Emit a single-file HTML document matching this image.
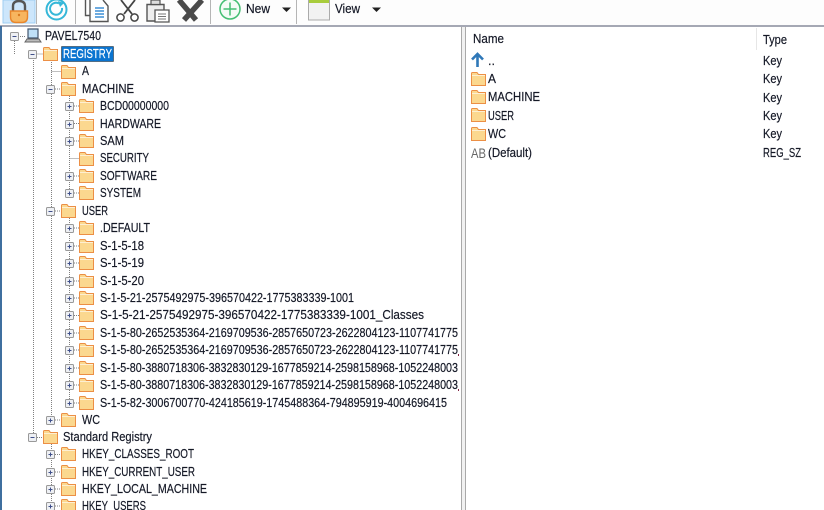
<!DOCTYPE html>
<html><head><meta charset="utf-8"><style>
html,body{margin:0;padding:0;background:#fff}
svg{display:block}
text{font-family:"Liberation Sans",sans-serif;font-size:12.5px;fill:#141826;stroke:#141826;stroke-width:.18px}
</style></head><body>
<svg width="824" height="510" viewBox="0 0 824 510" xmlns="http://www.w3.org/2000/svg">
<defs>
<g id="f"><path d="M0.5 2.5V1.5Q0.5 .5 1.5 .5H6L7.5 2.5H14.5V13.5H0.5Z" fill="#fbd88f" stroke="#ec8f45"/><path d="M1 3.5H14" stroke="#fff" stroke-opacity=".6"/></g>
<g id="m"><rect x=".5" y=".5" width="8" height="8" rx="1" fill="#eef0f4" stroke="#999"/><path d="M2.5 4.5h4" stroke="#40508a"/></g>
<g id="p"><rect x=".5" y=".5" width="8" height="8" rx="1" fill="#eef0f4" stroke="#999"/><path d="M2.5 4.5h4M4.5 2.5v4" stroke="#40508a"/></g>
</defs>
<rect width="824" height="510" fill="#fff"/>
<!-- toolbar -->
<rect width="824" height="26" fill="#fdfdfd"/>
<rect x="3" y="0" width="32" height="23" fill="#cde6fb" stroke="#9fcdf2"/>
<path d="M13 13V6Q13 1 19 1T25 6V13" fill="none" stroke="#555" stroke-width="2.4"/>
<path d="M10.500 11H27.500V17Q27.500 22.500 22 22.500H16Q10.500 22.500 10.500 17Z" fill="#f7b55f" stroke="#e8862c" stroke-width="1.4"/>
<circle cx="19" cy="15" r="1.2" fill="#d97a20"/>
<path d="M36.500 0V24M75.500 0V24M210.500 0V24M296.500 0V24" stroke="#b5b5b5"/>
<circle cx="56.500" cy="9.500" r="10" fill="none" stroke="#35b7d8" stroke-width="2"/>
<path d="M62 8A6 6 0 1 1 59 3.500" fill="none" stroke="#35b7d8" stroke-width="2"/>
<path d="M58 1L64 3L60 7Z" fill="#35b7d8"/>
<path d="M85.500 0V15.500H90M90 0V21.500H108V6L103 0" fill="#fff" stroke="#555" stroke-width="1.400"/>
<path d="M95 8H104M95 11H104M95 14H104M95 17H104" stroke="#3d8fd6" stroke-width="1.600"/>
<path d="M121 0L132 14M135 0L124 14" stroke="#444" stroke-width="1.800" fill="none"/>
<circle cx="120.500" cy="17.500" r="3.600" fill="#fff" stroke="#444" stroke-width="1.500"/>
<circle cx="134.500" cy="17.500" r="3.600" fill="#fff" stroke="#444" stroke-width="1.500"/>
<path d="M147 4.500H164V21H147Z" fill="#eee" stroke="#555" stroke-width="1.400"/>
<path d="M151 4.500V0H160V4.500Z" fill="#ddd" stroke="#555" stroke-width="1.200"/>
<path d="M155 10H169V22H155Z" fill="#fff" stroke="#555" stroke-width="1.300"/>
<path d="M158 14H166M158 16.500H166M158 19H166" stroke="#777"/>
<path d="M179 0L196 20M202 0L184 20" stroke="#4a4a4a" stroke-width="5.500"/>
<circle cx="230" cy="9" r="10" fill="#f4fbf6" stroke="#45bf74" stroke-width="1.500"/>
<path d="M230 2.500V15.500M223.500 9H236.500" stroke="#45bf74" stroke-width="1.500"/>
<text x="246" y="13" textLength="24" lengthAdjust="spacingAndGlyphs">New</text>
<path d="M282 7.500H291L286.500 12Z" fill="#222"/>
<rect x="308.500" y="0" width="21" height="20" fill="#f2f2f2" stroke="#aaa"/>
<path d="M309 1.500H329" stroke="#a8cc3c" stroke-width="3"/>
<text x="335" y="13" textLength="25" lengthAdjust="spacingAndGlyphs">View</text>
<path d="M372 7.500H381L376.500 12Z" fill="#222"/>
<!-- frame -->
<rect x="0" y="25" width="824" height="2" fill="#a5a8b4"/>
<rect x="0" y="26" width="2" height="484" fill="#3f6f9f"/>
<rect x="461" y="27" width="5" height="483" fill="#f1f1f1"/>
<path d="M461.500 27V510M465.500 27V510" stroke="#a9a9a9"/>
<!-- tree lines -->
<g stroke="#808080" stroke-dasharray="1 1" fill="none">
<path d="M14.500 41V54M33.500 58V437M33.500 54H43M18 36.500H25M51.500 58V420M51.500 71.500H61M55 89H61M55 211H61M55 420H61M37 437.500H43M51.500 442V506"/>
<path d="M69.500 94V193M69.500 216V403M74 106H79M74 123.500H79M74 141H79M69.500 158.500H79M74 176H79M74 193H79M74 228H79M74 246H79M74 263H79M74 281H79M74 298H79M74 315.500H79M74 333H79M74 350H79M74 368H79M74 385H79M74 403H79M55 454.500H61M55 472H61M55 489H61M55 506H61"/>
</g>
<!-- root -->
<use href="#m" x="10" y="32"/>
<path d="M28 29H38V38H28Z" fill="#bfe0f7" stroke="#44566e" stroke-width="1.200"/>
<path d="M25 42L27 39H39L41 42Z" fill="#bbb" stroke="#666"/>
<text x="45" y="40" textLength="56" lengthAdjust="spacingAndGlyphs">PAVEL7540</text>
<use href="#m" x="28" y="50"/><use href="#f" x="43" y="47"/>
<rect x="61.500" y="46.500" width="52" height="15" fill="#0a74d0" stroke="#222" stroke-dasharray="1 1"/>
<text x="63" y="58" textLength="49" lengthAdjust="spacingAndGlyphs" style="fill:#fff;stroke:#fff">REGISTRY</text>
<use href="#f" x="61" y="65"/><text x="82" y="75" textLength="7" lengthAdjust="spacingAndGlyphs">A</text>
<use href="#m" x="46" y="85"/><use href="#f" x="61" y="82"/><text x="82" y="93" textLength="52" lengthAdjust="spacingAndGlyphs">MACHINE</text>
<use href="#p" x="65" y="102"/><use href="#f" x="79" y="99"/><text x="100" y="110" textLength="69" lengthAdjust="spacingAndGlyphs">BCD00000000</text>
<use href="#p" x="65" y="120"/><use href="#f" x="79" y="117"/><text x="100" y="128" textLength="61" lengthAdjust="spacingAndGlyphs">HARDWARE</text>
<use href="#p" x="65" y="137"/><use href="#f" x="79" y="134"/><text x="100" y="145" textLength="24" lengthAdjust="spacingAndGlyphs">SAM</text>
<use href="#f" x="79" y="152"/><text x="100" y="162" textLength="49" lengthAdjust="spacingAndGlyphs">SECURITY</text>
<use href="#p" x="65" y="172"/><use href="#f" x="79" y="169"/><text x="100" y="180" textLength="57" lengthAdjust="spacingAndGlyphs">SOFTWARE</text>
<use href="#p" x="65" y="189"/><use href="#f" x="79" y="186"/><text x="100" y="197" textLength="41" lengthAdjust="spacingAndGlyphs">SYSTEM</text>
<use href="#m" x="46" y="207"/><use href="#f" x="61" y="204"/><text x="82" y="215" textLength="26" lengthAdjust="spacingAndGlyphs">USER</text>
<use href="#p" x="65" y="224"/><use href="#f" x="79" y="221"/><text x="100" y="232" textLength="50" lengthAdjust="spacingAndGlyphs">.DEFAULT</text>
<use href="#p" x="65" y="242"/><use href="#f" x="79" y="239"/><text x="100" y="250" textLength="44" lengthAdjust="spacingAndGlyphs">S-1-5-18</text>
<use href="#p" x="65" y="259"/><use href="#f" x="79" y="256"/><text x="100" y="267" textLength="44" lengthAdjust="spacingAndGlyphs">S-1-5-19</text>
<use href="#p" x="65" y="277"/><use href="#f" x="79" y="274"/><text x="100" y="285" textLength="44" lengthAdjust="spacingAndGlyphs">S-1-5-20</text>
<use href="#p" x="65" y="294"/><use href="#f" x="79" y="291"/><text x="100" y="302" textLength="254" lengthAdjust="spacingAndGlyphs">S-1-5-21-2575492975-396570422-1775383339-1001</text>
<use href="#p" x="65" y="311"/><use href="#f" x="79" y="308"/><text x="100" y="319" textLength="324" lengthAdjust="spacingAndGlyphs">S-1-5-21-2575492975-396570422-1775383339-1001_Classes</text>
<use href="#p" x="65" y="329"/><use href="#f" x="79" y="326"/><text x="100" y="337" textLength="358" lengthAdjust="spacingAndGlyphs">S-1-5-80-2652535364-2169709536-2857650723-2622804123-1107741775</text>
<use href="#p" x="65" y="346"/><use href="#f" x="79" y="343"/><text x="100" y="354" textLength="358" lengthAdjust="spacingAndGlyphs">S-1-5-80-2652535364-2169709536-2857650723-2622804123-1107741775</text>
<use href="#p" x="65" y="364"/><use href="#f" x="79" y="361"/><text x="100" y="372" textLength="358" lengthAdjust="spacingAndGlyphs">S-1-5-80-3880718306-3832830129-1677859214-2598158968-1052248003</text>
<use href="#p" x="65" y="381"/><use href="#f" x="79" y="378"/><text x="100" y="389" textLength="358" lengthAdjust="spacingAndGlyphs">S-1-5-80-3880718306-3832830129-1677859214-2598158968-1052248003</text>
<use href="#p" x="65" y="399"/><use href="#f" x="79" y="396"/><text x="100" y="407" textLength="347" lengthAdjust="spacingAndGlyphs">S-1-5-82-3006700770-424185619-1745488364-794895919-4004696415</text>
<rect x="458" y="354" width="1" height="2" fill="#802040"/><rect x="458" y="389" width="1" height="2" fill="#802040"/>
<use href="#p" x="46" y="416"/><use href="#f" x="61" y="413"/><text x="82" y="424" textLength="18" lengthAdjust="spacingAndGlyphs">WC</text>
<use href="#m" x="28" y="433"/><use href="#f" x="43" y="430"/><text x="63" y="441" textLength="89" lengthAdjust="spacingAndGlyphs">Standard Registry</text>
<use href="#p" x="46" y="450"/><use href="#f" x="61" y="447"/><text x="82" y="458" textLength="112" lengthAdjust="spacingAndGlyphs">HKEY_CLASSES_ROOT</text>
<use href="#p" x="46" y="468"/><use href="#f" x="61" y="465"/><text x="82" y="476" textLength="113" lengthAdjust="spacingAndGlyphs">HKEY_CURRENT_USER</text>
<use href="#p" x="46" y="485"/><use href="#f" x="61" y="482"/><text x="82" y="493" textLength="125" lengthAdjust="spacingAndGlyphs">HKEY_LOCAL_MACHINE</text>
<use href="#p" x="46" y="502"/><use href="#f" x="61" y="499"/><text x="82" y="510" textLength="64" lengthAdjust="spacingAndGlyphs">HKEY_USERS</text>
<!-- list -->
<path d="M756.500 28V50" stroke="#e6e6e6"/>
<text x="473" y="43" textLength="31" lengthAdjust="spacingAndGlyphs">Name</text>
<text x="763" y="44" textLength="24" lengthAdjust="spacingAndGlyphs">Type</text>
<path d="M477.500 67V55M472 59.500L477.500 54L483 59.500" fill="none" stroke="#2f78b8" stroke-width="2.600"/>
<text x="488" y="65" textLength="7" lengthAdjust="spacingAndGlyphs">..</text>
<text x="763" y="65" textLength="19" lengthAdjust="spacingAndGlyphs">Key</text>
<use href="#f" x="471" y="72"/><text x="488" y="83" textLength="8" lengthAdjust="spacingAndGlyphs">A</text><text x="763" y="83" textLength="19" lengthAdjust="spacingAndGlyphs">Key</text>
<use href="#f" x="471" y="90"/><text x="488" y="101" textLength="52" lengthAdjust="spacingAndGlyphs">MACHINE</text><text x="763" y="102" textLength="19" lengthAdjust="spacingAndGlyphs">Key</text>
<use href="#f" x="471" y="108"/><text x="488" y="120" textLength="26" lengthAdjust="spacingAndGlyphs">USER</text><text x="763" y="120" textLength="19" lengthAdjust="spacingAndGlyphs">Key</text>
<use href="#f" x="471" y="127"/><text x="488" y="138" textLength="18" lengthAdjust="spacingAndGlyphs">WC</text><text x="763" y="138" textLength="19" lengthAdjust="spacingAndGlyphs">Key</text>
<text x="471" y="158" textLength="15" lengthAdjust="spacingAndGlyphs" style="font-size:14px;fill:#666;stroke:none">AB</text>
<text x="488" y="157" textLength="44" lengthAdjust="spacingAndGlyphs">(Default)</text>
<text x="763" y="157" textLength="38" lengthAdjust="spacingAndGlyphs">REG_SZ</text>
</svg>
</body></html>
